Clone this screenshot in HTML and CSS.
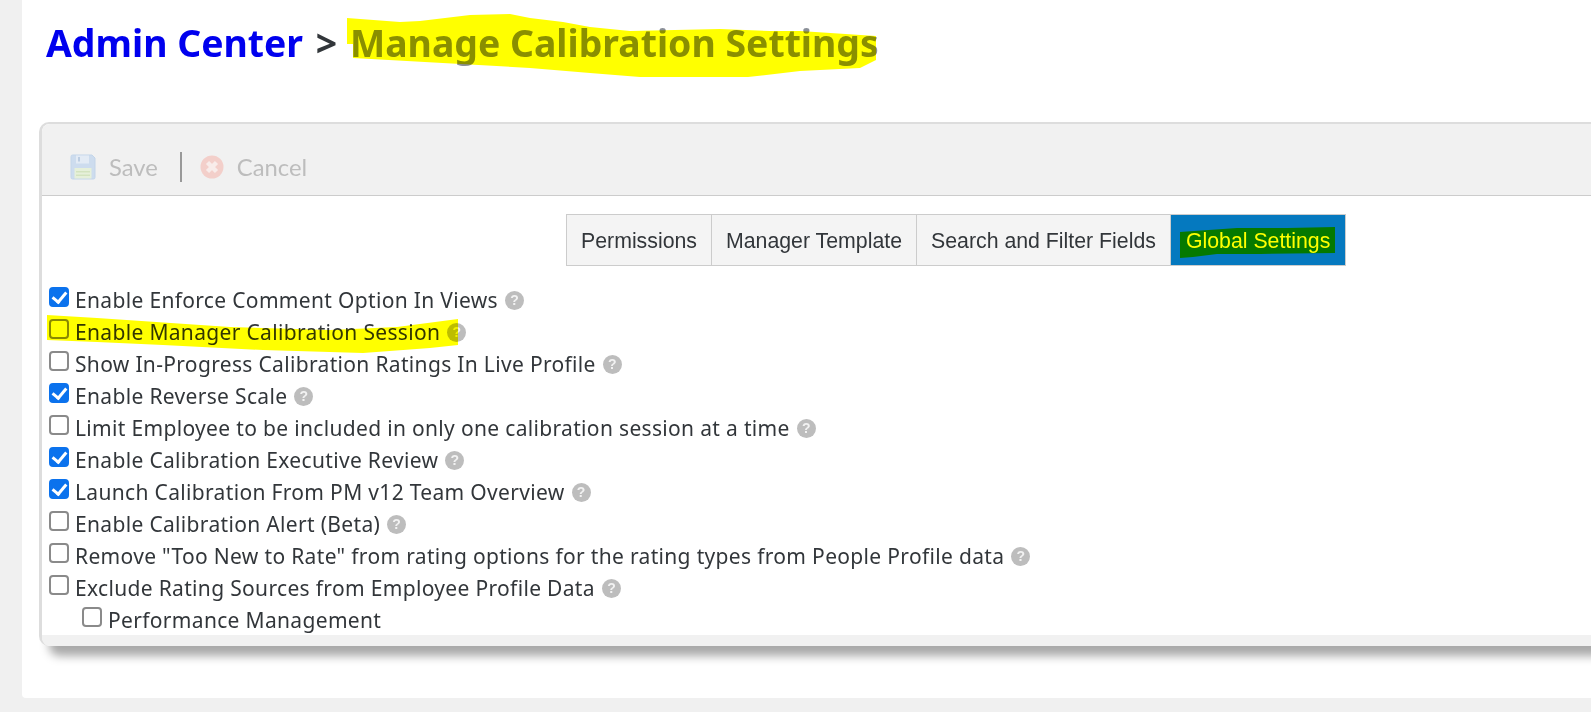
FILE: index.html
```html
<!DOCTYPE html>
<html lang="en">
<head>
    <meta charset="UTF-8">
    <title>Manage Calibration Settings</title>
    <link rel="stylesheet" href="styles.css">
</head>
<body>
    <div class="page">
        <h1 class="page-title"><a href="#">Admin Center</a> <span class="sep">&gt;</span> <span class="current">Manage Calibration Settings</span></h1>

        <div class="card">
            <div class="toolbar">
                <button class="tool-btn" disabled>
                    <svg class="icon-save" viewBox="0 0 26 26">
                        <path d="M1 2.5 A1.5 1.5 0 0 1 2.5 1 H22 L25 4 V23.5 A1.5 1.5 0 0 1 23.5 25 H2.5 A1.5 1.5 0 0 1 1 23.5 Z" fill="#cddcee" stroke="#c3d5e9"/>
                        <rect x="6" y="1.5" width="13" height="8" fill="#e3ebf5"/>
                        <rect x="8" y="3" width="2" height="4.5" fill="#bccde2"/>
                        <rect x="4.5" y="14" width="17" height="10.5" fill="#e6f0da"/>
                        <rect x="6" y="17" width="14" height="1.5" fill="#d3e3bf"/>
                        <rect x="6" y="20.5" width="14" height="1.5" fill="#d3e3bf"/>
                    </svg>
                    Save
                </button>
                <span class="tool-divider"></span>
                <button class="tool-btn" disabled>
                    <svg class="icon-cancel" viewBox="0 0 24 24">
                        <circle cx="12" cy="12" r="11.5" fill="#f3cfca"/>
                        <path d="M7.5 7.5 L16.5 16.5 M16.5 7.5 L7.5 16.5" stroke="#f8ecea" stroke-width="4.5"/>
                    </svg>
                    Cancel
                </button>
            </div>

            <div class="card-body">
                <div class="tabs">
                    <div class="tab">Permissions</div>
                    <div class="tab">Manager Template</div>
                    <div class="tab">Search and Filter Fields</div>
                    <div class="tab active">Global Settings</div>
                </div>

                <div class="options">
                    <label class="option"><input type="checkbox" checked> Enable Enforce Comment Option In Views <span class="help">?</span></label>
                    <label class="option"><input type="checkbox"> Enable Manager Calibration Session <span class="help">?</span></label>
                    <label class="option"><input type="checkbox"> Show In-Progress Calibration Ratings In Live Profile <span class="help">?</span></label>
                    <label class="option"><input type="checkbox" checked> Enable Reverse Scale <span class="help">?</span></label>
                    <label class="option"><input type="checkbox"> Limit Employee to be included in only one calibration session at a time <span class="help">?</span></label>
                    <label class="option"><input type="checkbox" checked> Enable Calibration Executive Review <span class="help">?</span></label>
                    <label class="option"><input type="checkbox" checked> Launch Calibration From PM v12 Team Overview <span class="help">?</span></label>
                    <label class="option"><input type="checkbox"> Enable Calibration Alert (Beta) <span class="help">?</span></label>
                    <label class="option"><input type="checkbox"> Remove "Too New to Rate" from rating options for the rating types from People Profile data <span class="help">?</span></label>
                    <label class="option"><input type="checkbox"> Exclude Rating Sources from Employee Profile Data <span class="help">?</span></label>
                    <label class="option sub"><input type="checkbox"> Performance Management</label>
                </div>
            </div>
            <div class="card-foot"></div>
        </div>
    </div>

    <!-- marker strokes drawn over the screenshot -->
    <svg class="marker" width="1591" height="712" viewBox="0 0 1591 712">
        <polygon fill="#ffff00" points="347,18 400,22 420,21 470,15 510,14 530,18 563,22 590,27 630,31 720,29 770,31 800,31 876,36 876,60 860,68 800,71 748,77 640,77 590,73 530,68 353,58 353,44 347,44"/>
        <polygon fill="#ffff00" points="47,315 97,318 230,327 330,330 397,327 458,319 458,345 430,348 363,353 263,350 163,345 97,342 47,340"/>
        <polygon fill="#ffff00" points="1180,232 1237,228 1287,228 1335,227 1335,253 1260,254 1217,254 1193,257 1180,258"/>
    </svg>
</body>
</html>
```

FILE: styles.css
```css
* {
    box-sizing: border-box;
}

html, body {
    margin: 0;
    height: 712px;
    overflow: hidden;
    background-color: #f0f0f0;
    font-family: 'Noto Sans', sans-serif;
}

.page {
    margin-left: 22px;
    height: 698px;
    padding: 18px 0 0 17px;
    background-color: #fff;
    border-bottom-left-radius: 4px;
    overflow: hidden;
}

.page-title {
    margin: 0 0 0 7px;
    height: 104px;
    font-size: 37.4px;
    line-height: 50px;
    font-weight: 700;
    color: #8a8f98;
    white-space: nowrap;
}

.page-title a {
    color: #0000ee;
    text-decoration: none;
}

.page-title .sep {
    margin: 0 3px;
    color: #32363a;
}

/* Card */
.card {
    width: 1600px;
    border-top: 2px solid #ddd;
    border-left: 3px solid #ddd;
    border-radius: 10px 0 0 10px;
    background-color: #fff;
    box-shadow: 10px 10px 10px rgba(0, 0, 0, 0.34);
}

.toolbar {
    display: flex;
    align-items: center;
    height: 72px;
    padding: 14px 0 0 28px;
    background-color: #f1f1f1;
    border-top-left-radius: 8px;
    border-bottom: 1px solid #ccc;
}

.tool-btn {
    display: flex;
    align-items: center;
    padding: 0;
    border: none;
    background: none;
    font-family: 'Lato', sans-serif;
    font-size: 23.8px;
    color: #bdbdbd;
}

.icon-save {
    width: 26px;
    height: 26px;
    margin-right: 13px;
    filter: blur(0.4px);
}

.icon-cancel {
    width: 24px;
    height: 24px;
    margin-right: 13px;
    filter: blur(0.4px);
}

.tool-divider {
    width: 2px;
    height: 30px;
    margin: 0 18px 0 22px;
    background-color: #999;
}

.card-body {
    height: 439px;
    overflow: hidden;
    padding: 18px 0 0 7px;
}

.card-foot {
    height: 11px;
    background-color: #f1f1f1;
    border-bottom-left-radius: 8px;
}

/* Tabs */
.tabs {
    display: flex;
    height: 52px;
    margin-left: 517px;
    border: 1px solid #ccc;
    width: max-content;
    font-family: 'Liberation Sans', Arial, sans-serif;
    font-size: 21.3px;
    color: #32363a;
}

.tab {
    display: flex;
    align-items: center;
    padding: 2px 14px 0;
    background-color: #f4f4f4;
    border-right: 1px solid #ccc;
}

.tab.active {
    padding: 2px 15px 0;
    background-color: #0579bf;
    color: #fff;
    border-right: none;
}

/* Options */
.options {
    margin-top: 18px;
}

.option {
    display: flex;
    align-items: center;
    height: 32px;
    font-size: 21px;
    letter-spacing: 0.33px;
    color: #32363a;
    white-space: nowrap;
}

.option input {
    appearance: none;
    flex: none;
    position: relative;
    top: -3px;
    width: 20px;
    height: 20px;
    margin: 0 6px 0 0;
    border: 2px solid #8a8a8a;
    border-radius: 4px;
    background-color: #fff;
}

.option input:checked {
    border-color: #0b72ed;
    background-color: #0b72ed;
}

.option input:checked::after {
    content: "";
    position: absolute;
    left: 4px;
    top: 0;
    width: 6px;
    height: 11px;
    border: solid #fff;
    border-width: 0 3px 3px 0;
    transform: rotate(40deg);
}

.option.sub {
    padding-left: 33px;
}

.help {
    display: inline-block;
    flex: none;
    width: 19px;
    height: 19px;
    margin-left: 7px;
    border-radius: 50%;
    background-color: #bdbdbd;
    color: #f2f2f2;
    font-family: 'Liberation Sans', Arial, sans-serif;
    font-size: 14px;
    font-weight: 700;
    line-height: 19px;
    text-align: center;
    letter-spacing: 0;
    filter: blur(0.3px);
}

/* Marker highlight, multiplied over the page */
.marker {
    position: absolute;
    left: 0;
    top: 0;
    pointer-events: none;
    mix-blend-mode: multiply;
}
```
